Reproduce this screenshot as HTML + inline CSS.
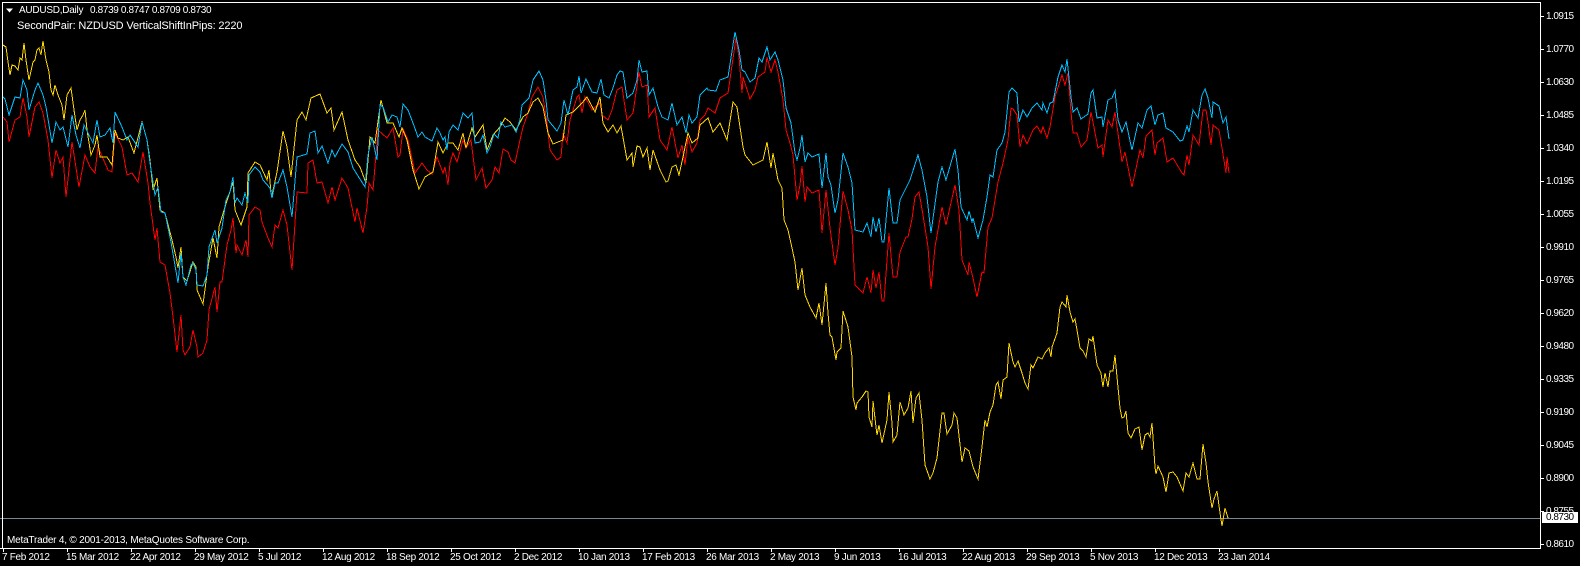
<!DOCTYPE html>
<html><head><meta charset="utf-8">
<style>
html,body{margin:0;padding:0;background:#000}
#c{position:relative;width:1580px;height:566px;background:#000;overflow:hidden;font-family:"Liberation Sans",sans-serif;font-size:10px;color:#fff}
svg{position:absolute;left:0;top:0}
.t{position:absolute;white-space:pre;line-height:13px}
.l{position:absolute;white-space:pre;line-height:13px;left:1546px;letter-spacing:-.5px}
.d{position:absolute;white-space:pre;line-height:13px;top:551px;letter-spacing:-.3px}
</style></head><body><div id="c">
<svg width="1580" height="566" viewBox="0 0 1580 566" fill="none" shape-rendering="crispEdges">
<path d="M0 518.5H1540" stroke="#778899"/>
<polyline stroke="#ff0000" points="3,117 7,122 9,142 15,120 20,117 23,98 27,117 29,137 35,107 39,102 43,113 48,140 52,178 56,150 60,163 63,157 66,197 72,142 79,187 85,155 90,167 95,173 98,147 108,170 112,172 115,133 122,147 127,175 132,173 138,182 143,152 148,183 150,203 155,240 157,228 160,262 165,265 170,293 173,317 177,352 181,315 183,350 185,355 190,347 193,330 197,347 198,357 203,353 207,340 209,310 215,287 217,312 220,282 222,282 227,245 231,230 233,218 236,253 237,245 242,255 246,240 248,257 249,215 255,207 260,210 262,222 268,238 272,247 275,225 278,228 283,210 287,225 292,270 297,192 307,193 308,163 313,160 317,183 322,182 328,203 332,187 335,200 342,178 348,188 355,222 357,208 363,233 367,207 369,183 373,190 378,130 387,138 393,128 398,157 400,155 403,129 408,140 415,173 422,163 427,170 432,174 437,157 443,173 445,167 448,185 450,163 453,153 457,162 463,140 466,148 471,140 476,180 482,168 486,188 492,180 495,167 499,173 503,149 508,152 511,160 515,163 520,140 523,127 528,113 532,97 538,87 543,97 547,123 550,150 557,160 561,157 563,133 567,143 570,120 577,97 579,95 582,113 585,97 592,110 600,103 602,115 608,120 612,110 617,90 622,87 627,120 633,113 639,72 642,87 647,85 649,117 655,108 660,140 667,150 672,127 678,158 682,145 685,165 688,137 692,152 697,143 700,120 705,115 708,108 715,113 720,98 728,93 736,38 739,57 742,93 743,77 750,99 755,90 758,77 765,72 767,57 771,72 775,60 778,72 783,100 786,130 790,143 793,155 797,200 800,185 802,166 805,202 807,187 812,193 819,190 822,233 826,190 830,228 835,265 838,248 843,191 848,210 852,230 855,285 863,293 867,277 871,293 873,270 876,288 879,272 882,301 884,301 889,233 893,277 897,277 900,252 906,237 908,237 912,219 915,197 919,192 923,215 928,247 931,289 935,247 942,207 946,225 955,185 959,210 962,260 968,275 969,262 973,278 977,297 982,272 984,273 988,227 992,218 998,182 1003,163 1008,140 1011,108 1013,109 1017,115 1020,147 1023,135 1027,144 1033,130 1037,126 1041,133 1043,127 1047,138 1050,127 1055,97 1062,75 1065,85 1068,73 1071,112 1073,133 1077,133 1081,147 1087,140 1091,112 1098,148 1102,145 1103,157 1108,120 1112,127 1115,112 1122,162 1125,152 1132,187 1140,150 1143,158 1146,136 1152,130 1155,155 1157,143 1163,138 1167,162 1173,158 1182,173 1184,175 1187,155 1189,165 1193,135 1199,145 1203,110 1206,110 1208,122 1211,145 1213,125 1219,130 1222,148 1226,173 1227,157 1229,173"/>
<polyline stroke="#ffd700" points="3,45 6,47 8,62 10,75 12,65 15,66 18,70 20,58 22,60 24,43 26,60 29,80 33,62 35,60 37,50 39,48 41,55 43,41 46,60 49,72 51,90 53,95 55,85 58,95 62,105 64,120 67,95 71,88 74,110 77,130 80,120 83,115 85,110 87,130 91,155 95,145 97,135 100,157 107,157 112,165 115,130 118,138 123,140 128,137 134,153 142,122 147,140 150,160 153,190 157,178 160,210 165,213 172,240 176,257 178,268 181,247 183,277 187,281 193,262 196,267 197,290 203,304 208,267 213,238 217,258 219,227 225,207 233,182 235,210 241,225 247,207 248,173 255,162 260,165 267,180 269,170 271,193 272,195 277,172 283,131 287,147 291,177 297,120 302,112 306,120 311,98 320,94 327,113 331,108 334,130 342,112 348,140 355,160 360,167 366,183 370,137 375,143 381,100 387,123 393,123 399,137 402,128 407,140 413,170 419,189 425,177 433,172 438,142 443,153 448,143 453,143 458,150 463,133 466,148 472,128 475,137 483,125 487,150 493,135 500,127 505,118 510,122 516,130 523,117 528,113 533,102 538,98 543,107 548,133 553,144 563,140 566,115 573,112 582,103 587,97 595,112 600,97 603,123 608,132 613,125 617,133 621,126 627,160 632,153 633,167 637,146 640,147 643,157 647,148 650,170 653,150 660,170 666,182 668,181 672,167 676,165 679,175 683,157 688,133 692,143 698,138 700,125 708,118 713,132 720,123 727,140 733,102 737,107 740,127 743,147 745,155 753,165 759,162 763,160 767,142 771,168 773,153 778,180 782,188 784,220 788,230 792,248 795,262 798,290 802,268 805,295 810,307 816,318 819,303 822,325 826,283 828,313 830,335 832,337 836,360 837,352 841,348 843,311 848,327 852,357 853,397 856,410 857,403 862,397 866,391 868,392 869,417 872,427 873,401 876,427 877,435 879,425 882,443 887,420 889,392 892,423 893,442 897,435 900,402 904,415 908,408 911,391 913,423 916,398 919,393 922,420 925,465 930,479 933,473 937,458 942,413 944,413 947,434 952,425 954,413 957,418 962,462 965,448 969,451 973,467 978,479 982,447 985,420 987,427 990,412 993,405 996,385 998,382 1001,399 1003,380 1007,377 1009,343 1013,362 1015,367 1018,361 1022,373 1025,383 1028,389 1031,365 1033,368 1038,357 1042,359 1045,353 1049,348 1051,357 1052,347 1057,333 1060,307 1062,302 1066,307 1067,295 1070,312 1073,322 1075,319 1077,330 1080,348 1083,351 1086,357 1089,339 1092,341 1093,336 1097,365 1101,373 1103,387 1105,373 1108,387 1110,371 1113,371 1115,355 1117,377 1120,408 1122,418 1124,417 1126,411 1128,433 1131,438 1135,429 1139,427 1142,450 1145,435 1148,433 1150,437 1152,423 1155,467 1156,474 1158,466 1163,477 1166,492 1169,473 1173,472 1177,477 1183,491 1186,473 1189,477 1193,463 1197,479 1200,479 1203,444 1206,463 1208,482 1212,508 1214,499 1217,491 1220,513 1222,526 1225,508 1228,518"/>
<polyline stroke="#00bfff" points="3,97 5,99 9,115 15,97 20,98 23,80 27,90 29,110 35,90 38,83 43,95 46,107 52,143 56,122 60,130 63,127 68,147 72,115 76,135 80,148 84,125 88,133 93,143 97,120 100,137 105,135 110,128 113,143 115,112 122,127 127,140 130,135 138,147 142,122 147,140 150,163 155,195 158,187 161,212 165,213 171,242 177,277 178,283 181,253 183,277 186,285 191,265 193,263 196,270 197,285 203,286 207,275 209,247 215,230 217,243 222,228 226,200 230,192 233,177 235,203 237,198 242,205 245,193 248,203 249,175 255,167 260,172 263,180 270,188 272,198 275,183 278,183 283,170 287,187 292,217 297,157 307,154 310,133 315,131 318,153 322,146 328,163 332,150 335,157 342,144 348,152 353,168 365,187 368,155 372,137 377,160 380,105 383,107 388,122 392,115 397,117 400,127 403,104 408,110 413,123 418,137 422,132 425,137 432,141 437,128 440,133 443,140 445,137 447,150 449,132 453,125 458,130 463,113 468,118 472,113 475,143 480,142 483,135 487,153 490,147 494,134 498,138 501,122 505,127 512,125 516,132 520,120 522,105 529,98 533,80 539,71 543,80 546,100 548,120 557,131 561,123 564,100 568,115 573,90 577,87 579,76 581,93 586,79 592,92 597,93 601,79 604,95 609,98 613,88 617,75 620,71 623,72 627,98 633,93 637,80 639,60 642,72 647,71 649,95 653,88 658,107 662,117 668,120 672,103 677,125 682,117 686,133 689,115 692,123 697,117 700,95 707,88 708,90 716,91 720,80 728,77 735,32 739,50 742,70 745,72 750,82 755,78 759,58 762,62 767,47 770,60 775,52 778,60 783,80 786,108 791,123 795,153 797,160 800,148 802,135 805,162 808,153 812,157 819,154 822,188 826,153 828,177 831,185 835,213 838,200 843,153 848,167 852,183 855,230 863,232 867,223 871,237 873,217 876,232 879,218 882,242 884,242 889,188 893,223 897,223 900,200 905,190 910,180 918,155 922,170 927,197 931,233 938,182 942,167 946,180 955,149 958,170 961,207 967,220 969,211 972,222 973,218 978,238 983,220 987,197 990,175 993,177 997,150 1002,143 1005,132 1009,92 1012,88 1017,93 1019,122 1023,110 1027,117 1032,108 1037,103 1042,110 1043,103 1047,113 1050,103 1053,102 1058,77 1062,65 1065,72 1067,59 1071,97 1073,112 1077,108 1081,119 1088,114 1091,93 1093,90 1097,118 1102,117 1103,127 1108,100 1112,98 1115,91 1118,120 1122,132 1126,122 1132,150 1138,123 1142,128 1147,110 1151,106 1155,125 1158,115 1163,113 1166,128 1173,132 1180,141 1183,140 1187,126 1189,132 1193,110 1198,118 1202,95 1205,89 1208,98 1212,118 1213,102 1219,106 1223,123 1226,117 1229,139"/>
<path d="M2 2.5H1540.5V548.5H0M2.5 2V548" stroke="#fff"/>
<path d="M1541 16.5h3M1541 49.5h3M1541 82.5h3M1541 115.5h3M1541 148.5h3M1541 181.5h3M1541 214.5h3M1541 247.5h3M1541 280.5h3M1541 313.5h3M1541 346.5h3M1541 379.5h3M1541 412.5h3M1541 445.5h3M1541 478.5h3M1541 511.5h3M1541 544.5h3" stroke="#fff"/>
<path d="M3.5 549v3M67.5 549v3M131.5 549v3M195.5 549v3M259.5 549v3M323.5 549v3M387.5 549v3M451.5 549v3M515.5 549v3M579.5 549v3M643.5 549v3M707.5 549v3M771.5 549v3M835.5 549v3M899.5 549v3M963.5 549v3M1027.5 549v3M1091.5 549v3M1155.5 549v3M1219.5 549v3" stroke="#fff"/>
<path d="M6 8.5h7l-3.5 4z" fill="#fff" shape-rendering="auto"/>
</svg>
<div class="t" style="left:19px;top:4px;letter-spacing:-.25px">AUDUSD,Daily</div>
<div class="t" style="left:90px;top:4px;letter-spacing:-.35px">0.8739 0.8747 0.8709 0.8730</div>
<div class="t" style="left:17px;top:19px;font-size:11px;line-height:14px;letter-spacing:-.13px">SecondPair: NZDUSD VerticalShiftInPips: 2220</div>
<div class="t" style="left:7px;top:534px;letter-spacing:-.2px">MetaTrader 4, © 2001-2013, MetaQuotes Software Corp.</div>
<div class="l" style="top:10px">1.0915</div><div class="l" style="top:43px">1.0770</div><div class="l" style="top:76px">1.0630</div><div class="l" style="top:109px">1.0485</div><div class="l" style="top:142px">1.0340</div><div class="l" style="top:175px">1.0195</div><div class="l" style="top:208px">1.0055</div><div class="l" style="top:241px">0.9910</div><div class="l" style="top:274px">0.9765</div><div class="l" style="top:307px">0.9620</div><div class="l" style="top:340px">0.9480</div><div class="l" style="top:373px">0.9335</div><div class="l" style="top:406px">0.9190</div><div class="l" style="top:439px">0.9045</div><div class="l" style="top:472px">0.8900</div><div class="l" style="top:505px">0.8755</div><div class="l" style="top:538px">0.8610</div>
<div style="position:absolute;left:1542px;top:512px;width:36px;height:11px;background:#fff"></div>
<div class="l" style="top:511px;color:#000">0.8730</div>
<div class="d" style="left:2px">7 Feb 2012</div><div class="d" style="left:66px">15 Mar 2012</div><div class="d" style="left:130px">22 Apr 2012</div><div class="d" style="left:194px">29 May 2012</div><div class="d" style="left:258px">5 Jul 2012</div><div class="d" style="left:322px">12 Aug 2012</div><div class="d" style="left:386px">18 Sep 2012</div><div class="d" style="left:450px">25 Oct 2012</div><div class="d" style="left:514px">2 Dec 2012</div><div class="d" style="left:578px">10 Jan 2013</div><div class="d" style="left:642px">17 Feb 2013</div><div class="d" style="left:706px">26 Mar 2013</div><div class="d" style="left:770px">2 May 2013</div><div class="d" style="left:834px">9 Jun 2013</div><div class="d" style="left:898px">16 Jul 2013</div><div class="d" style="left:962px">22 Aug 2013</div><div class="d" style="left:1026px">29 Sep 2013</div><div class="d" style="left:1090px">5 Nov 2013</div><div class="d" style="left:1154px">12 Dec 2013</div><div class="d" style="left:1218px">23 Jan 2014</div>
</div></body></html>
